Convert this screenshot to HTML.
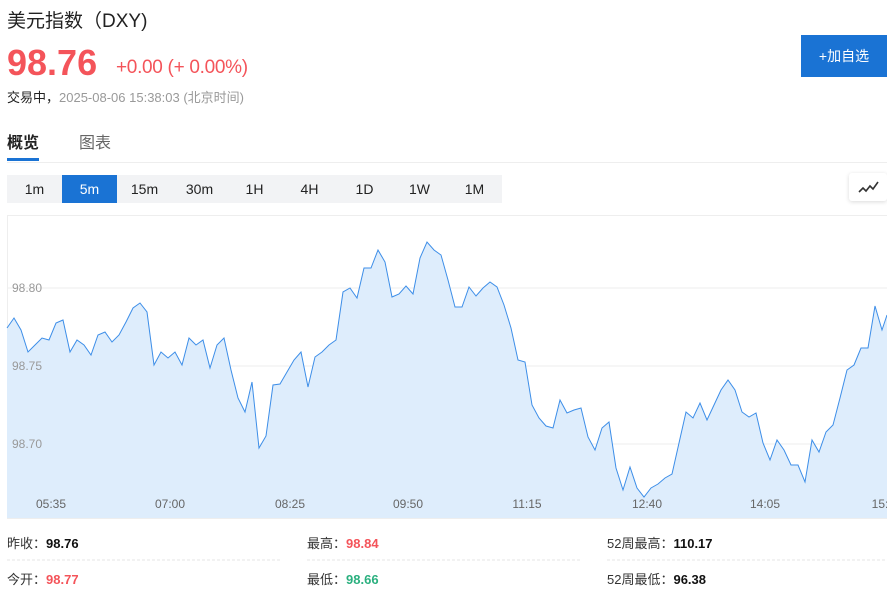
<!DOCTYPE html><html><head><meta charset="utf-8"><style>
body{margin:0;width:887px;height:593px;overflow:hidden;background:#fff;font-family:"Liberation Sans","Noto Sans CJK SC",sans-serif;position:relative;color:#333}
.a{position:absolute;white-space:nowrap}
.tf{position:absolute;top:175px;left:7px;width:495px;height:28px;background:#f2f3f5;display:flex}
.tf div{width:55px;text-align:center;line-height:28px;font-size:14px;color:#222}
.tf .on{background:#1a73d4;color:#fff}
.st{font-size:13px;color:#333}.st b{color:#111}
</style></head><body>
<div class="a" style="left:7px;top:6px;font-size:19px;color:#222">美元指数（DXY)</div>
<div class="a" style="left:7px;top:42px;font-size:36px;font-weight:bold;color:#f4545a">98.76</div>
<div class="a" style="left:116px;top:57px;font-size:19px;color:#f4545a;letter-spacing:-0.3px">+0.00 (+ 0.00%)</div>
<div class="a" style="left:7px;top:87px;font-size:13px;color:#222">交易中，<span style="color:#999">2025-08-06 15:38:03 (北京时间)</span></div>
<div class="a" style="left:801px;top:35px;width:86px;height:42px;background:#1a73d4;color:#fff;font-size:14px;line-height:42px;text-align:center">+加自选</div>
<div class="a" style="left:7px;top:129px;font-size:16px;font-weight:bold;color:#222">概览</div>
<div class="a" style="left:79px;top:129px;font-size:16px;color:#666">图表</div>
<div class="a" style="left:7px;top:158px;width:32px;height:3px;background:#1a73d4"></div>
<div class="a" style="left:7px;top:162px;width:880px;height:1px;background:#eee"></div>
<div class="tf"><div>1m</div><div class="on">5m</div><div>15m</div><div>30m</div><div>1H</div><div>4H</div><div>1D</div><div>1W</div><div>1M</div></div>
<div class="a" style="left:849px;top:173px;width:38px;height:28px;background:#fff;box-shadow:0 1px 4px rgba(0,0,0,.15);border-radius:3px"><svg width="38" height="28"><path d="M10 19 L14 15 L17 18 L21 13 L24 16 L29 9" stroke="#333" stroke-width="1.6" fill="none"/></svg></div>
<svg class="a" style="left:0;top:0" width="887" height="593">
<rect x="7.5" y="215.5" width="880" height="303" fill="none" stroke="#eee"/>
<line x1="7" y1="288" x2="887" y2="288" stroke="#eee"/><line x1="7" y1="366" x2="887" y2="366" stroke="#eee"/><line x1="7" y1="444" x2="887" y2="444" stroke="#eee"/>
<polygon fill="#deedfc" points="7,518 7,328 14,318 21,330 28,352 35,345 42,338 49,340 56,323 63,320 70,352 77,340 84,345 91,355 98,335 105,332 112,342 119,335 126,322 133,308 140,303 147,312 154,365 161,352 168,358 175,352 182,365 189,338 196,345 203,340 210,368 217,345 224,338 231,370 238,398 245,412 252,382 259,448 266,436 273,385 280,384 287,372 294,360 301,352 308,387 315,357 322,352 329,345 336,340 343,292 350,288 357,298 364,268 371,268 378,250 385,262 392,297 399,294 406,286 413,294 420,258 427,242 434,250 441,255 448,280 455,307 462,307 469,287 476,296 483,288 490,282 497,287 504,305 511,328 518,360 525,362 532,405 539,418 546,426 553,428 560,400 567,413 574,410 581,408 588,437 595,450 602,428 609,422 616,468 623,490 630,467 637,488 644,497 651,488 658,484 665,478 672,474 679,443 686,412 693,418 700,403 707,420 714,405 721,390 728,380 735,390 742,412 749,417 756,413 763,443 770,460 777,440 784,450 791,465 798,465 805,482 812,440 819,452 826,432 833,425 840,398 847,370 854,365 861,348 868,348 875,306 882,330 887,315 887,518"/>
<polyline fill="none" stroke="#3d8ee8" stroke-width="1" points="7,328 14,318 21,330 28,352 35,345 42,338 49,340 56,323 63,320 70,352 77,340 84,345 91,355 98,335 105,332 112,342 119,335 126,322 133,308 140,303 147,312 154,365 161,352 168,358 175,352 182,365 189,338 196,345 203,340 210,368 217,345 224,338 231,370 238,398 245,412 252,382 259,448 266,436 273,385 280,384 287,372 294,360 301,352 308,387 315,357 322,352 329,345 336,340 343,292 350,288 357,298 364,268 371,268 378,250 385,262 392,297 399,294 406,286 413,294 420,258 427,242 434,250 441,255 448,280 455,307 462,307 469,287 476,296 483,288 490,282 497,287 504,305 511,328 518,360 525,362 532,405 539,418 546,426 553,428 560,400 567,413 574,410 581,408 588,437 595,450 602,428 609,422 616,468 623,490 630,467 637,488 644,497 651,488 658,484 665,478 672,474 679,443 686,412 693,418 700,403 707,420 714,405 721,390 728,380 735,390 742,412 749,417 756,413 763,443 770,460 777,440 784,450 791,465 798,465 805,482 812,440 819,452 826,432 833,425 840,398 847,370 854,365 861,348 868,348 875,306 882,330 887,315"/>
<g font-size="12" fill="#999" font-family="Liberation Sans"><text x="12" y="292">98.80</text><text x="12" y="370">98.75</text><text x="12" y="448">98.70</text></g>
<g font-size="12" fill="#666" font-family="Liberation Sans" text-anchor="middle"><text x="51" y="508">05:35</text><text x="170" y="508">07:00</text><text x="290" y="508">08:25</text><text x="408" y="508">09:50</text><text x="527" y="508">11:15</text><text x="647" y="508">12:40</text><text x="765" y="508">14:05</text><text x="880" y="508">15:</text></g>
<g stroke="#e5e5e5" stroke-dasharray="3,2"><line x1="7" y1="560" x2="280" y2="560"/><line x1="307" y1="560" x2="580" y2="560"/><line x1="607" y1="560" x2="887" y2="560"/></g>
</svg>
<div class="a st" style="left:7px;top:533px">昨收：<b>98.76</b></div>
<div class="a st" style="left:7px;top:569px">今开：<b style="color:#f4545a">98.77</b></div>
<div class="a st" style="left:307px;top:533px">最高：<b style="color:#f4545a">98.84</b></div>
<div class="a st" style="left:307px;top:569px">最低：<b style="color:#2bb07f">98.66</b></div>
<div class="a st" style="left:607px;top:533px">52周最高：<b>110.17</b></div>
<div class="a st" style="left:607px;top:569px">52周最低：<b>96.38</b></div>
</body></html>
